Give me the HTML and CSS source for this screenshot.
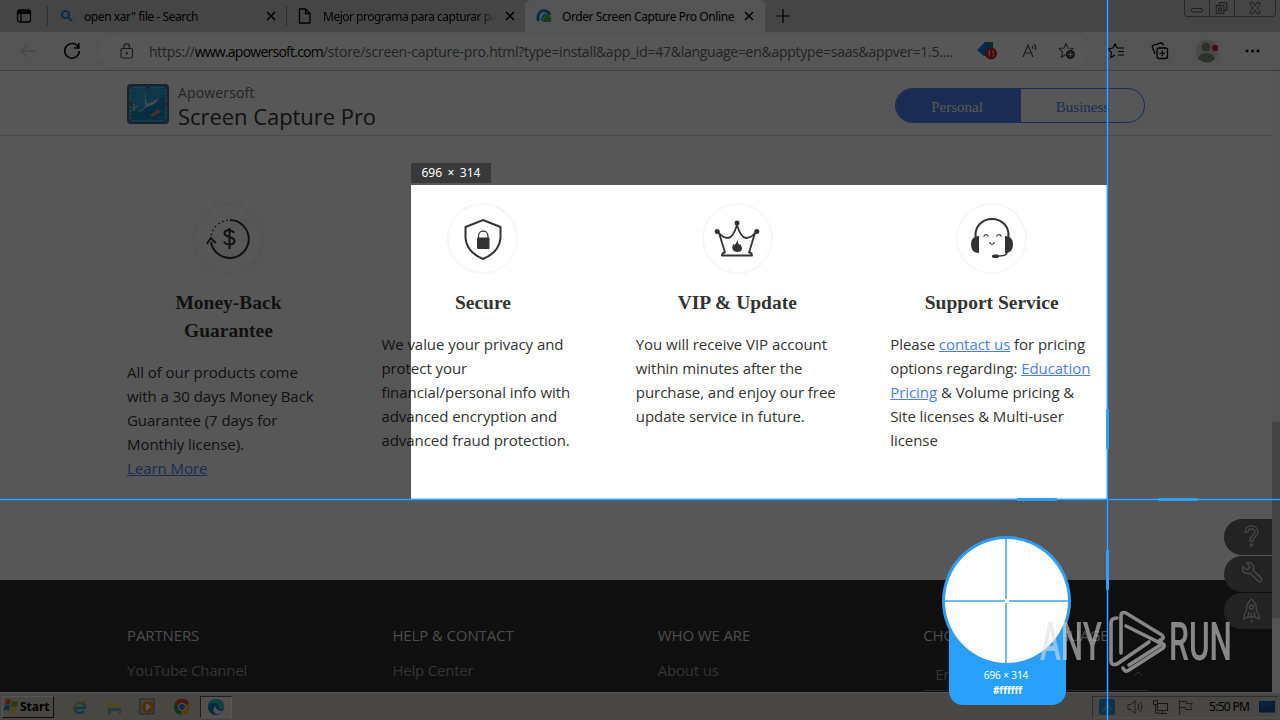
FILE: index.html
```html
<!DOCTYPE html>
<html lang="en">
<head>
    <meta charset="UTF-8">
    <meta name="viewport" content="width=device-width, initial-scale=1.0">
    <title>Order Screen Capture Pro Online</title>
    <link rel="stylesheet" href="styles.css">
</head>
<body>
    <div class="screen">
        <div class="tabs">
            <svg class="tab-menu" width="16" height="16" viewBox="0 0 16 16" fill="none" stroke="#000" stroke-width="1.3"><rect x="1.5" y="2" width="13" height="12" rx="2"/><path d="M2 3.5h12M2 5h12" stroke-width="2"/><path d="M5 5v9"/></svg>
            <div class="tab first">
                <svg width="14" height="14" viewBox="0 0 14 14" fill="none" stroke="#2f79d8"><circle cx="5.5" cy="5.5" r="3.5" stroke-width="2"/><path d="M8.5 8.5l3.5 3.5" stroke-width="2.4"/></svg>
                <span class="tab-title">open xar" file - Search</span>
                <svg class="close" width="10" height="10" viewBox="0 0 10 10" stroke="#000" stroke-width="1.5"><path d="M1 1l8 8M9 1l-8 8"/></svg>
            </div>
            <div class="tab second">
                <svg width="14" height="16" viewBox="0 0 14 16" fill="none" stroke="#000" stroke-width="1.3"><path d="M1.5 1h6l4.500 4.500V15H1.500zM7.500 1v4.500H12"/></svg>
                <span class="tab-title fade">Mejor programa para capturar pa</span>
                <svg class="close" width="10" height="10" viewBox="0 0 10 10" stroke="#000" stroke-width="1.5"><path d="M1 1l8 8M9 1l-8 8"/></svg>
            </div>
            <div class="tab active">
                <svg width="16" height="16" viewBox="0 0 16 16" fill="none"><path d="M2.500 13C0 5 6 1.500 10 3q3 1 4 4" stroke="#1b83d0" stroke-width="3"/><path d="M6 13q0-5 4-7" stroke="#25a4dd" stroke-width="2"/><path d="M7 14q1-7 5-8 4 3 3 8z" fill="#48b648"/></svg>
                <span class="tab-title">Order Screen Capture Pro Online</span>
                <svg class="close" width="10" height="10" viewBox="0 0 10 10" stroke="#000" stroke-width="1.5"><path d="M1 1l8 8M9 1l-8 8"/></svg>
            </div>
            <svg class="new-tab" width="14" height="14" viewBox="0 0 14 14" stroke="#000" stroke-width="1.200"><path d="M7 0v14M0 7h14"/></svg>
            <div class="window-buttons">
                <svg width="24" height="16" viewBox="0 0 24 16" fill="none" stroke="#555"><rect x="6.500" y="8.500" width="11" height="3.500" rx="1.500"/></svg>
                <svg width="25" height="16" viewBox="0 0 25 16" fill="none" stroke="#444"><path d="M9.500 5.500v-3h8v8h-3"/><rect x="6.500" y="5.500" width="8" height="8"/><rect x="9" y="8" width="3" height="3"/></svg>
                <svg width="41" height="16" viewBox="0 0 41 16" fill="none" stroke="#555"><path d="M15.500 2.500h3l2 3 2-3h3v2l-3 3.500 3 3.500v2h-3l-2-3-2 3h-3v-2l3-3.500-3-3.500z"/></svg>
            </div>
        </div>

        <div class="toolbar">
            <svg class="back" width="18" height="16" viewBox="0 0 18 16" fill="none" stroke="#d2d2d2" stroke-width="1.300"><path d="M17 8H2M8 2L2 8l6 6"/></svg>
            <svg class="reload" width="18" height="18" viewBox="0 0 18 18" fill="none" stroke="#000" stroke-width="1.500"><path d="M15.500 5.500A7.300 7.300 0 1 0 16.300 9M15.800 1v5h-5"/></svg>
            <div class="address">
                <svg class="lock" width="14" height="16" viewBox="0 0 14 16" fill="none" stroke="#555" stroke-width="1.200"><rect x="1" y="5.500" width="11.500" height="9.500" rx="1.500"/><path d="M4 5.500V3.500a2.700 2.700 0 0 1 5.400 0v2"/><circle cx="6.800" cy="10.200" r=".6" fill="#555"/></svg>
                <span class="url">https://<b>www.apowersoft.com</b>/store/screen-capture-pro.html?type=install&amp;app_id=47&amp;language=en&amp;apptype=saas&amp;appver=1.5....</span>
                <svg class="tag" width="22" height="20" viewBox="0 0 22 20"><path d="M1 9l8-8h8v14H8z" fill="#0878d0"/><path d="M9 1h8v5l-3-3z" fill="#158c62"/><circle cx="15" cy="12.500" r="6" fill="#d32020"/><path d="M12.300 10.500l1-1v6M16.300 10.500l1-1v6" stroke="#ddd" fill="none"/></svg>
                <svg class="aloud" width="16" height="16" viewBox="0 0 16 16" fill="none" stroke="#555" stroke-width="1.200"><path d="M1 14L6 2l5 12M3 10h6M10 3c1 1 1 2 1 3M12 1c2 2 2 4 1.500 6"/></svg>
                <svg class="fav" width="18" height="18" viewBox="0 0 18 18"><path d="M8 1.500l2 4.500 5 .5-4 3.500 1 5-4-2.500L3.500 15l1-5L1 6.500 6 6z" fill="none" stroke="#666" stroke-width="1.200"/><circle cx="12.500" cy="12.500" r="4.500" fill="#444"/><path d="M12.500 10v5M10 12.500h5" stroke="#eee"/></svg>
            </div>
            <div class="tools">
                <svg width="18" height="18" viewBox="0 0 18 18" fill="none" stroke="#000" stroke-width="1.200"><path d="M10 6L8 2 5.800 6 1 7l3.500 3.500-1 5L8 13M10 6h7M11 9.500h6M11 13h6"/></svg>
                <svg width="18" height="18" viewBox="0 0 18 18" fill="none" stroke="#000" stroke-width="1.300"><rect x="6" y="6" width="10.500" height="10.500" rx="2"/><path d="M11.300 8.500v5.500M8.500 11.300H14M4 12L1.500 5.500c-.5-1 0-2 1-2.500L10 1c1 0 2 .5 2.500 2.500"/></svg>
                <svg width="24" height="24" viewBox="0 0 24 24"><circle cx="12" cy="12" r="11.500" fill="#dedad3"/><circle cx="11" cy="8" r="4.500" fill="#849087"/><path d="M3 20q1-6 8-6t9 6q-8 7-17 0z" fill="#849087"/><circle cx="20" cy="9" r="3" fill="#e00b2c"/></svg>
                <svg width="16" height="16" viewBox="0 0 16 16"><circle cx="2" cy="8" r="1.500"/><circle cx="7.500" cy="8" r="1.500"/><circle cx="13" cy="8" r="1.500"/></svg>
            </div>
        </div>

        <div class="page">
            <div class="document">
                <header class="site-header">
                    <svg class="logo" width="42" height="40" viewBox="0 0 42 40"><rect x="1" y="1" width="40" height="38" rx="3" fill="#2ba4da" stroke="#49677e" stroke-width="2"/><path d="M3 28q18-2 36-18v27H3z" fill="#1584bc"/><rect x="3.500" y="3.500" width="35" height="33" fill="none" stroke="#7dccec" stroke-dasharray="2 2"/><path d="M20 7q-3 7 0 13Q27 18 32 14q-4 8-13 9-3-9 1-16z" fill="#c4e8e4"/><path d="M19 22q-3 6-8 5M7 20v7M11 21l-3 3" fill="none" stroke="#d9eeec"/><path d="M23 31l8-6 3 3-9 5z" fill="#d48b77"/><g fill="#667"><circle cx="3" cy="3" r="2"/><circle cx="21" cy="3" r="2"/><circle cx="39" cy="3" r="2"/><circle cx="3" cy="20" r="2"/><circle cx="39" cy="20" r="2"/><circle cx="3" cy="37" r="2"/><circle cx="39" cy="37" r="2"/></g></svg>
                    <div class="product">
                        <div class="brand">Apowersoft</div>
                        <div class="name">Screen Capture Pro</div>
                    </div>
                    <div class="plan-switch"><span class="selected">Personal</span><span>Business</span></div>
                </header>

                <section class="features">
                    <div class="feature">
                        <div class="icon"><svg width="46" height="46" viewBox="0 0 46 46" fill="none" stroke="#333" stroke-width="2"><path d="M24 4A19 19 0 1 1 5 26"/><path d="M22 4.200A19 19 0 0 0 5 21" stroke-width="1.500" stroke-dasharray="1.500 3"/><path d="M.8 28l4-6 5 5"/><path d="M28 17c-1-3-9-4-9.500 0-.5 5 10 3 10 8 0 4.500-9 4.500-10.500.5M23.500 12v21"/></svg></div>
                        <h3>Money-Back Guarantee</h3>
                        <p>All of our products come<br>with a 30 days Money Back<br>Guarantee (7 days for<br>Monthly license).<br><a href="#">Learn More</a></p>
                    </div>
                    <div class="feature">
                        <div class="icon"><svg width="46" height="46" viewBox="0 0 46 46" fill="none" stroke="#333" stroke-width="2"><path d="M23 4l17.500 7v11q-1 14-17.500 21Q6.500 36 5.500 22V11z"/><rect x="17" y="21.500" width="12.500" height="11.500" rx="1" fill="#333" stroke="none"/><path d="M18.500 22v-2c0-6.500 9.500-6.500 9.500 0v2" stroke-width="1.200"/></svg></div>
                        <h3>Secure</h3>
                        <p>We value your privacy and<br>protect your<br>financial/personal info with<br>advanced encryption and<br>advanced fraud protection.</p>
                    </div>
                    <div class="feature">
                        <div class="icon"><svg width="46" height="46" viewBox="0 0 46 46" fill="none" stroke="#333" stroke-width="1.800" stroke-linejoin="round" stroke-linecap="round"><path d="M23 9q-4 13-9 13-5 0-9-5l6 19.500q-3 0-3 3h30q0-3-3-3L41 17q-4 5-9 5t-9-13z"/><g fill="#333" stroke="none"><circle cx="23" cy="7" r="2.500"/><circle cx="3.200" cy="15.500" r="2.500"/><circle cx="42.800" cy="15.500" r="2.500"/><path d="M23.500 24q0 3 2 5l1-1q4 8-3 8t-4.500-8l1.500 1q2-2 3-5z"/></g></svg></div>
                        <h3>VIP &amp; Update</h3>
                        <p>You will receive VIP account<br>within minutes after the<br>purchase, and enjoy our free<br>update service in future.</p>
                    </div>
                    <div class="feature">
                        <div class="icon"><svg width="46" height="46" viewBox="0 0 46 46" fill="none" stroke="#333"><path d="M6.500 21C5 -3 41 -3 39.500 21" stroke-width="2"/><path d="M10 20q-8 0-8 8.500T10 37zM36 20q8 0 8 8.500T36 37z" fill="#333" stroke="none"/><path d="M38 36q0 4-8 4" stroke-width="1.500"/><rect x="23" y="38.500" width="7" height="3.500" rx="1.700" fill="#333" stroke="none"/><path d="M14.500 20.500q2.500-4 5 0M27.500 20.500q2.500-4 5 0M20.500 26q2.500 5 5 0" stroke-width="1.200"/></svg></div>
                        <h3>Support Service</h3>
                        <p>Please <a href="#">contact us</a> for pricing<br>options regarding: <a href="#">Education</a><br><a href="#">Pricing</a> &amp; Volume pricing &amp;<br>Site licenses &amp; Multi-user<br>license</p>
                    </div>
                </section>

                <footer>
                    <div><h4>PARTNERS</h4><span>YouTube Channel</span></div>
                    <div><h4>HELP &amp; CONTACT</h4><span>Help Center</span></div>
                    <div><h4>WHO WE ARE</h4><span>About us</span></div>
                    <div>
                        <h4>CHOOSE YOUR LANGUAGE</h4>
                        <div class="language"><span>English</span><svg width="10" height="6" viewBox="0 0 10 6" fill="none" stroke="#888"><path d="M1 5l4-4 4 4"/></svg></div>
                    </div>
                </footer>

                <div class="side-buttons">
                    <div><svg width="24" height="24" viewBox="0 0 24 24" fill="none" stroke="#ccc" stroke-width="1.300"><path d="M6 8c0-8 13-8 13 0 0 4-5 4-5 9h-3c0-6 5-6 5-9 0-4-7-4-7 0z"/><circle cx="12.500" cy="21" r="1"/></svg></div>
                    <div><svg width="24" height="24" viewBox="0 0 24 24" fill="none" stroke="#ccc" stroke-width="1.500"><path d="M4 6l4 3 3-3-3-4c5-1 8 3 6 7l8 8c2 3-1 5-3 3l-8-8C6 14 2 10 4 6z"/></svg></div>
                    <div><svg width="24" height="26" viewBox="0 0 24 26" fill="none" stroke="#ccc" stroke-width="1.300"><path d="M12.500 1c-5 4-5 8-5 12l-2.500 4v4l4-2h7l4 2v-4l-2.500-4c0-4 0-8-5-12zM9 19l1-5M16 19l-1-5M12.500 15v5M12.500 22v3"/><circle cx="12.500" cy="9" r="2"/></svg></div>
                </div>
            </div>
            <div class="scrollbar"><div class="thumb"></div></div>
        </div>

        <div class="taskbar">
            <div class="start"><svg width="17" height="17" viewBox="0 0 17 17"><path d="M3 2q3-2 5 0L7 7Q5 5.500 2 7z" fill="#e85a24"/><path d="M9 2.500q3 2 6 0L14 8q-3 2-6 0z" fill="#71b238"/><path d="M2 8q3-2 5 0l-1 5q-3-2-6 0z" fill="#2a81cf"/><path d="M8 9q3 2 6 0l-1 5q-3 2-6 0z" fill="#f4bd26"/></svg>Start</div>
            <div class="launchers">
                <svg width="18" height="18" viewBox="0 0 18 18" fill="none"><path d="M4 10h10c0-7-10-7-10 0 0 6 7 6 9 3" stroke="#3aa5df" stroke-width="2.500"/><path d="M1 15Q-1 8 16 2" stroke="#e7b23a" stroke-width="1.500"/></svg>
                <svg width="18" height="18" viewBox="0 0 18 18"><path d="M2 4h6l1 2h7v10H2z" fill="#e8ce72"/><path d="M3 10h13v6H3z" fill="#6bb1d4"/><path d="M6 13h8v3H6z" fill="#e8dcaa"/></svg>
                <svg width="18" height="18" viewBox="0 0 18 18"><rect x="1" y="1" width="14" height="15" fill="#b9c8d4" stroke="#667"/><circle cx="9" cy="9" r="6" fill="#ec891c"/><path d="M7 5l5 4-5 4z" fill="#fff"/></svg>
                <svg width="18" height="18" viewBox="0 0 18 18"><circle cx="9" cy="9" r="8" fill="#e5bc28"/><path d="M9 9L2 5a8 8 0 0 1 14 0z" fill="#d94332"/><path d="M9 9L2 5a8 8 0 0 0 6 12z" fill="#35934d"/><circle cx="9" cy="9" r="4" fill="#eee"/><circle cx="9" cy="9" r="3" fill="#3678dc"/></svg>
                <div class="running"><svg width="18" height="18" viewBox="0 0 18 18"><circle cx="9" cy="9" r="8" fill="#147fc1"/><path d="M1 7C3-1 17-1 17 8q0 4-5 3 1-6-5-6-4 0-6 2z" fill="#35bdab"/><path d="M9 8q-1 5 7 5-5 6-9 1-2-4 2-6z" fill="#e4f0f2"/></svg></div>
            </div>
            <div class="tray">
                <svg width="16" height="16" viewBox="0 0 16 16"><rect width="16" height="16" rx="2" fill="#3492c8"/><path d="M3 12q5-1 5-9 1 6 5 7" fill="none" stroke="#7fc4e0" stroke-width="1.500"/></svg>
                <svg width="18" height="16" viewBox="0 0 18 16" fill="none" stroke="#555"><path d="M1 5.500h3l4-4v13l-4-4H1zM11 5q2 3 0 6M13 3q4 5 0 10"/></svg>
                <svg width="18" height="16" viewBox="0 0 18 16" fill="none" stroke="#444"><rect x="5.500" y="4.500" width="10" height="7"/><path d="M7 14.500h8M10.500 12v2M1.500 1.500h4v4h-4zM3.500 6v8H7"/></svg>
                <svg width="18" height="16" viewBox="0 0 18 16" fill="none" stroke="#555"><path d="M2.500 1v15M2.500 2.500h7v2h6l-2 3 1 3h-6v-2h-6"/></svg>
                <span class="clock">5:50 PM</span>
                <svg class="desktop" width="16" height="12" viewBox="0 0 16 12"><rect width="16" height="11" fill="#2865b2" stroke="#18427e"/><path d="M0 8l16-5v8H0z" fill="#1c4e96"/></svg>
            </div>
        </div>

        <!-- capture overlay -->
        <div class="selection"></div>
        <div class="size-label">696 × 314</div>
        <div class="guide horizontal"></div>
        <div class="guide vertical"></div>
        <div class="handle h1"></div>
        <div class="handle h2"></div>
        <div class="handle v1"></div>
        <div class="handle v2"></div>
        <div class="magnifier">
            <div class="lens"></div>
            <div class="lens-size">696 × 314</div>
            <div class="lens-color">#ffffff</div>
        </div>
        <svg class="watermark" width="210" height="70" viewBox="0 0 210 70">
            <text x="5" y="53" textLength="62" lengthAdjust="spacingAndGlyphs">ANY</text>
            <text x="134" y="53" textLength="63" lengthAdjust="spacingAndGlyphs">RUN</text>
            <path d="M82 11q-6 0-6 5v38q0 5 6 3l32-22M86 46V9q0-5 5-3l36 22q3 4-2 5M91 19l36 18-33 21M88 61q2 5 6 2l34-22q3-3-1-5"/>
        </svg>
    </div>
</body>
</html>
```
FILE: styles.css
```css
* {
    box-sizing: border-box;
}
body {
    margin: 0;
    font-family: 'Open Sans', sans-serif;
    color: #333;
}
svg {
    display: block;
    flex: none;
}
.screen {
    position: relative;
    width: 1280px;
    height: 720px;
    display: flex;
    flex-direction: column;
    overflow: hidden;
    background: #fff;
}

/* browser */
.tabs {
    height: 32px;
    display: flex;
    align-items: center;
    background: #cbcbcb;
    color: #000;
    font-family: 'Noto Sans', sans-serif;
    font-size: 12px;
    letter-spacing: -0.42px;
}
.tab-menu {
    margin: 0 15px 0 16px;
}
.tab {
    height: 32px;
    display: flex;
    align-items: center;
    white-space: nowrap;
}
.tab .close {
    margin-left: auto;
}
.tab.first {
    width: 239px;
    padding: 0 10px 0 13px;
    gap: 10px;
    background: linear-gradient(#888, #888) 0 50% / 1px 20px no-repeat;
}
.tab.second {
    width: 239px;
    padding: 0 10px 0 12px;
    gap: 8px;
    background: linear-gradient(#888, #888) 0 50% / 1px 20px no-repeat;
}
.tab.active {
    width: 240px;
    padding: 0 11px;
    gap: 10px;
    background: #f7f7f7;
    border-radius: 6px 6px 0 0;
}
.fade {
    margin-left: 3px;
    letter-spacing: -0.5px;
    mask-image: linear-gradient(90deg, #000 90%, transparent);
}
.new-tab {
    margin-left: 11px;
}
.window-buttons {
    align-self: flex-start;
    display: flex;
    margin: 0 4px 0 auto;
    border: 1px solid #777;
    border-top: 0;
    border-radius: 0 0 4px 4px;
}
.window-buttons svg + svg {
    border-left: 1px solid #777;
}
.toolbar {
    height: 39px;
    display: flex;
    align-items: center;
    background: #f7f7f7;
    border-bottom: 1px solid #bbb;
}
.back {
    margin-left: 19px;
}
.reload {
    margin: 0 28px 0 26px;
}
.address {
    width: 989px;
    height: 32px;
    margin-left: -9px;
    padding-left: 20px;
    display: flex;
    align-items: center;
    border-radius: 16px;
    background: #fff;
}
.url {
    flex: none;
    width: 842px;
    padding-left: 15px;
    font-size: 14px;
    letter-spacing: -0.26px;
    color: #666;
    white-space: nowrap;
}
.url b {
    font-weight: 400;
    letter-spacing: -0.76px;
    color: #000;
}
.aloud {
    margin-left: 24px;
}
.fav {
    margin-left: 20px;
}
.tools {
    margin-left: 18px;
    display: flex;
    align-items: center;
    gap: 26px;
}

/* page */
.page {
    flex: 1;
    min-height: 0;
    display: flex;
}
.document {
    position: relative;
    flex: 1;
    display: flex;
    flex-direction: column;
    overflow: hidden;
}
.scrollbar {
    width: 8px;
    padding-top: 351px;
    background: #f8f8f8;
}
.thumb {
    height: 196px;
    background: #c8c8c8;
}
.site-header {
    height: 65px;
    padding: 0 127px;
    display: flex;
    align-items: center;
    border-bottom: 1px solid #d5d5d5;
}
.logo {
    margin-top: 2px;
}
.product {
    margin: 5px 0 0 9px;
}
.brand {
    font-size: 14px;
    letter-spacing: 0.15px;
    line-height: 20px;
    color: #666;
}
.name {
    font-size: 22px;
    line-height: 26px;
    letter-spacing: -0.05px;
}
.plan-switch {
    width: 250px;
    height: 35px;
    margin: 4px 0 0 auto;
    display: flex;
    border: 1px solid #4a80f4;
    border-radius: 18px;
    overflow: hidden;
    font: 15px/37px 'Liberation Serif', serif;
    color: #4a80f4;
    text-align: center;
}
.plan-switch span {
    width: 123px;
}
.plan-switch .selected {
    width: 125px;
    padding-right: 3px;
    background: #4a80f4;
    color: #fff;
}
.features {
    height: 444px;
    padding: 67px 0 0 127px;
    display: grid;
    grid-template-columns: repeat(4, 203px);
    column-gap: 51.4px;
    align-items: start;
}
.icon {
    width: 71px;
    height: 71px;
    margin: 0 auto 15px;
    display: flex;
    align-items: center;
    justify-content: center;
    border: 2px solid #f6f6f6;
    border-radius: 50%;
}
.feature h3 {
    margin: 0 20px 15px;
    font: bold 19.5px/28px 'Liberation Serif', serif;
    text-align: center;
}
.feature p {
    margin: 0;
    font-size: 15px;
    letter-spacing: -0.05px;
    line-height: 24px;
    white-space: nowrap;
}
a {
    color: #4a80f4;
}
footer {
    flex: 1;
    padding: 42px 0 0 127px;
    display: grid;
    grid-template-columns: repeat(4, 265.4px);
    background: #2c2c2c;
    color: #999;
    font-size: 15px;
    letter-spacing: -0.2px;
    line-height: 26px;
    white-space: nowrap;
}
footer h4 {
    margin: 0 0 9px;
    font-weight: 400;
    letter-spacing: -0.12px;
    color: #ddd;
}
.language {
    width: 226px;
    height: 34px;
    padding: 0 6px 0 12px;
    display: flex;
    align-items: center;
    justify-content: space-between;
    border-bottom: 1px solid #777;
}
.side-buttons {
    position: absolute;
    right: 0;
    top: 448px;
    display: grid;
    gap: 1px;
}
.side-buttons div {
    width: 48px;
    height: 36px;
    padding: 5px 0 0 15px;
    background: #686868;
    border-radius: 18px 0 0 18px;
}

/* taskbar */
.taskbar {
    height: 28px;
    display: flex;
    align-items: center;
    background: #d4d0c8;
    border-top: 1px solid #fff;
    color: #000;
}
.start {
    width: 52px;
    height: 22px;
    margin-left: 2px;
    display: flex;
    align-items: center;
    border: 1px solid #fff;
    border-right-color: #333;
    border-bottom-color: #333;
    font: bold 12px 'Noto Sans', sans-serif;
}
.launchers {
    margin-left: 17px;
    display: flex;
    align-items: center;
    gap: 16px;
}
.running {
    width: 32px;
    height: 22px;
    margin-left: -7px;
    padding: 1px 6px;
    background: #eceae5;
    border: 1px solid #fff;
    border-left-color: #555;
    border-top-color: #555;
}
.tray {
    width: 187px;
    height: 22px;
    margin: 0 1px 0 auto;
    padding: 0 3px 0 6px;
    display: flex;
    align-items: center;
    gap: 7px;
    border: 1px solid #eee;
    border-left-color: #888;
    border-top-color: #888;
    font: 12px 'Noto Sans', sans-serif;
    letter-spacing: -0.7px;
}
.tray svg:first-child {
    margin-right: 5px;
}
.clock {
    margin-left: 7px;
    white-space: nowrap;
}
.desktop {
    margin-left: auto;
}

/* capture overlay */
.selection {
    position: absolute;
    left: 411px;
    top: 185px;
    width: 696px;
    height: 314px;
    box-shadow: 0 0 0 1000px rgba(0, 0, 0, 0.66);
}
.size-label {
    position: absolute;
    left: 411px;
    top: 163px;
    width: 80px;
    height: 20px;
    background: #393939;
    color: #fff;
    font: 12px/20px 'Noto Sans', sans-serif;
    letter-spacing: 0.1px;
    word-spacing: 2px;
    text-align: center;
}
.guide,
.handle {
    position: absolute;
    background: #2ea0f7;
}
.guide {
    background: #3aa5fa;
    box-shadow: 0 0 1px 0.5px rgba(0, 125, 255, 0.7);
}
.horizontal {
    left: 0;
    right: 0;
    top: 499px;
    height: 1px;
}
.vertical {
    left: 1107px;
    top: 0;
    bottom: 0;
    width: 1px;
}
.h1,
.h2 {
    left: 1017px;
    top: 498px;
    width: 40px;
    height: 3px;
    border-radius: 1px;
}
.h2 {
    left: 1158px;
}
.v1,
.v2 {
    left: 1106px;
    top: 409px;
    width: 3px;
    height: 40px;
    border-radius: 1px;
}
.v2 {
    top: 550px;
}
.magnifier {
    position: absolute;
    left: 949px;
    top: 600px;
    width: 117px;
    height: 105px;
    padding-top: 68px;
    background: #28a0ff;
    border-radius: 0 0 14px 14px;
    color: #fff;
    font: 10px/15px 'Noto Sans', sans-serif;
    letter-spacing: -0.1px;
    text-align: center;
}
.lens {
    position: absolute;
    left: -7px;
    top: -64px;
    width: 129px;
    height: 130px;
    border: 3px solid #309cf4;
    border-radius: 50%;
    background:
        linear-gradient(#fff, #fff) 50% 50% / 4px 4px no-repeat,
        linear-gradient(#69bfea, #69bfea) 60px 0 / 2px 100% no-repeat,
        linear-gradient(#69bfea, #69bfea) 50% 50% / 100% 2px no-repeat,
        #fff;
}
.lens-size {
    margin-right: 3px;
}
.lens-color {
    font-weight: 700;
}
.watermark {
    position: absolute;
    left: 1035px;
    top: 607px;
    opacity: 0.58;
    font: 500 53px 'Roboto', sans-serif;
}
.watermark text {
    fill: #dedede;
}
.watermark path {
    fill: none;
    stroke: #dedede;
    stroke-width: 3.6;
    stroke-linecap: round;
}
```
